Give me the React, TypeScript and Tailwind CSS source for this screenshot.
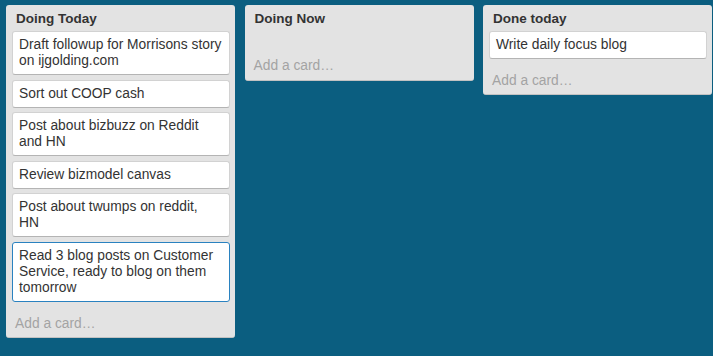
import React from "react";

type Card = { text: React.ReactNode; active?: boolean };

const lists: { title: string; cards: Card[] }[] = [
  {
    title: "Doing Today",
    cards: [
      { text: <>Draft followup for Morrisons story<br />on ijgolding.com</> },
      { text: "Sort out COOP cash" },
      { text: <>Post about bizbuzz on Reddit<br />and HN</> },
      { text: "Review bizmodel canvas" },
      { text: <>Post about twumps on reddit,<br />HN</> },
      {
        text: <>Read 3 blog posts on Customer<br />Service, ready to blog on them<br />tomorrow</>,
        active: true,
      },
    ],
  },
  { title: "Doing Now", cards: [] },
  { title: "Done today", cards: [{ text: "Write daily focus blog" }] },
];

function List({ title, cards }: { title: string; cards: Card[] }) {
  return (
    <div className="w-[229px] shrink-0 rounded-[3px] bg-[#e3e3e3] border-b border-[#c2c2c2]">
      <div className="pt-[5px] pb-[3px] px-[10px] text-[13.5px] leading-[18px] font-bold text-[#333]">
        {title}
      </div>
      <div className="min-h-[18px] pl-[6px] pr-[5px]">
        {cards.map((c, i) => (
          <div
            key={i}
            className={
              "mb-[4.6px] rounded-[3px] bg-white px-[6px] py-[5px] text-[13.8px] leading-[16px] whitespace-nowrap overflow-hidden text-[#333] border " +
              (c.active
                ? "border-[#2a82c0]"
                : "border-[#d2d2d2] border-b-[#b4b4b4]")
            }
          >
            {c.text}
          </div>
        ))}
      </div>
      <div className="pt-[8.4px] pb-[4.3px] px-[9px] text-[13.8px] leading-[18px] text-[#a3a3a3]">
        Add a card…
      </div>
    </div>
  );
}

export default function App() {
  return (
    <div
      className="w-[713px] h-[356px] bg-[#0b5e80] overflow-hidden"
      style={{ fontFamily: '"Liberation Sans", Arial, sans-serif' }}
    >
      <div className="flex items-start gap-[9.5px] pl-[6px] pt-[5px]">
        {lists.map((l) => (
          <List key={l.title} title={l.title} cards={l.cards} />
        ))}
      </div>
    </div>
  );
}
